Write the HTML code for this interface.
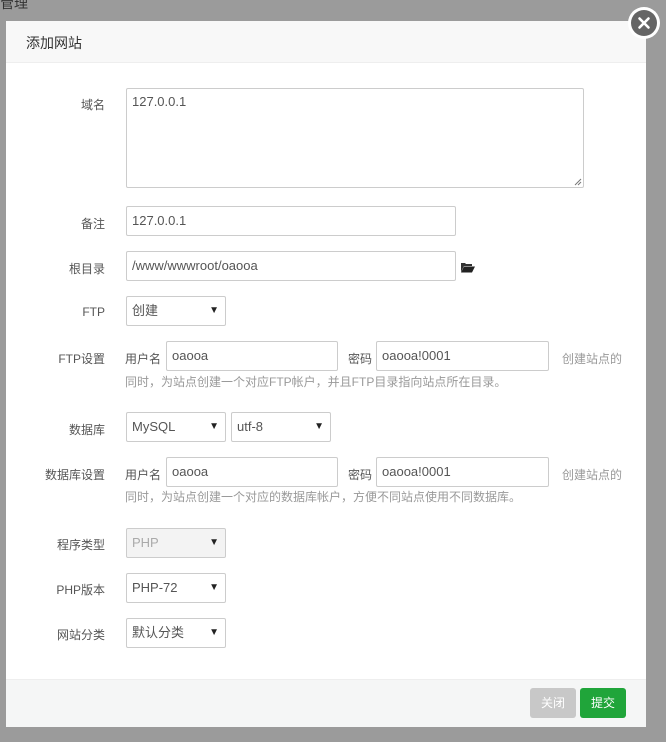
<!DOCTYPE html>
<html><head><meta charset="utf-8"><style>
*{box-sizing:border-box;margin:0;padding:0}
body{width:666px;height:742px;background:#9b9b9b;position:relative;overflow:hidden;font-family:"Liberation Sans","Noto Sans CJK SC",sans-serif;font-size:12px;color:#555}
.a{position:absolute}
.dlg{left:6px;top:21px;width:640px;height:706px;background:#fff}
.hd{left:6px;top:21px;width:640px;height:42px;background:#f8f8f8;border-bottom:1px solid #eee;font-size:14px;color:#333;padding:12px 0 0 20px}
.ft{left:6px;top:679px;width:640px;height:48px;background:#f5f6f6;border-top:1px solid #eee}
.lb{width:90px;text-align:right;left:15px;color:#555}
.in{border:1px solid #ccc;border-radius:2px;background:#fff;color:#555;padding:0 5px;line-height:28px;height:30px;font-size:13px}
.sel::after{content:"▼";position:absolute;right:6px;top:0;line-height:28px;font-size:10px;color:#222}
.g{color:#999}
.btn{height:30px;width:46px;border-radius:3px;color:#fff;text-align:center;line-height:30px}
</style></head><body>
<div class="a" style="left:0;top:-7px;font-size:14px;color:#333">管理</div>
<div class="a dlg"></div>
<div class="a hd">添加网站</div>
<div class="a" style="left:628px;top:7px;width:32px;height:32px;border-radius:50%;background:#fff"></div>
<div class="a" style="left:631px;top:10px;width:26px;height:26px;border-radius:50%;background:#656565">
<svg width="26" height="26"><path d="M8.5 8.5L17.5 17.5M17.5 8.5L8.5 17.5" stroke="#fff" stroke-width="2.6" stroke-linecap="round"/></svg></div>

<div class="a lb" style="top:96px">域名</div>
<div class="a in" style="left:126px;top:88px;width:458px;height:100px;line-height:26px">127.0.0.1</div>
<svg class="a" style="left:574px;top:178px" width="8" height="8"><path d="M7 1L1 7M7 4L4 7" stroke="#777" stroke-width="1"/></svg>
<div class="a lb" style="top:215px">备注</div>
<div class="a in" style="left:126px;top:206px;width:330px">127.0.0.1</div>
<div class="a lb" style="top:260px">根目录</div>
<div class="a in" style="left:126px;top:251px;width:330px">/www/wwwroot/oaooa</div>
<svg class="a" style="left:460px;top:261px" width="16" height="12"><path d="M1 2h4l1 1h6v2H4L1 11z" fill="#333"/><path d="M4 5.5h11L12 11.5H1z" fill="#222"/></svg>
<div class="a lb" style="top:305px">FTP</div>
<div class="a in sel" style="left:126px;top:296px;width:100px">创建</div>

<div class="a lb" style="top:350px">FTP设置</div>
<div class="a" style="left:125px;top:350px">用户名</div>
<div class="a in" style="left:166px;top:341px;width:172px">oaooa</div>
<div class="a" style="left:348px;top:350px">密码</div>
<div class="a in" style="left:376px;top:341px;width:173px">oaooa!0001</div>
<div class="a g" style="left:562px;top:350px">创建站点的</div>
<div class="a g" style="left:125px;top:373px">同时，为站点创建一个对应FTP帐户，并且FTP目录指向站点所在目录。</div>

<div class="a lb" style="top:421px">数据库</div>
<div class="a in sel" style="left:126px;top:412px;width:100px">MySQL</div>
<div class="a in sel" style="left:231px;top:412px;width:100px">utf-8</div>

<div class="a lb" style="top:466px">数据库设置</div>
<div class="a" style="left:125px;top:466px">用户名</div>
<div class="a in" style="left:166px;top:457px;width:172px">oaooa</div>
<div class="a" style="left:348px;top:466px">密码</div>
<div class="a in" style="left:376px;top:457px;width:173px">oaooa!0001</div>
<div class="a g" style="left:562px;top:466px">创建站点的</div>
<div class="a g" style="left:125px;top:488px">同时，为站点创建一个对应的数据库帐户，方便不同站点使用不同数据库。</div>

<div class="a lb" style="top:536px">程序类型</div>
<div class="a in sel" style="left:126px;top:528px;width:100px;background:#f3f3f3;color:#aaa">PHP</div>
<div class="a lb" style="top:581px">PHP版本</div>
<div class="a in sel" style="left:126px;top:573px;width:100px">PHP-72</div>
<div class="a lb" style="top:626px">网站分类</div>
<div class="a in sel" style="left:126px;top:618px;width:100px">默认分类</div>

<div class="a ft"></div>
<div class="a btn" style="left:530px;top:688px;background:#c8c8c8">关闭</div>
<div class="a btn" style="left:580px;top:688px;background:#20a53a">提交</div>
</body></html>
